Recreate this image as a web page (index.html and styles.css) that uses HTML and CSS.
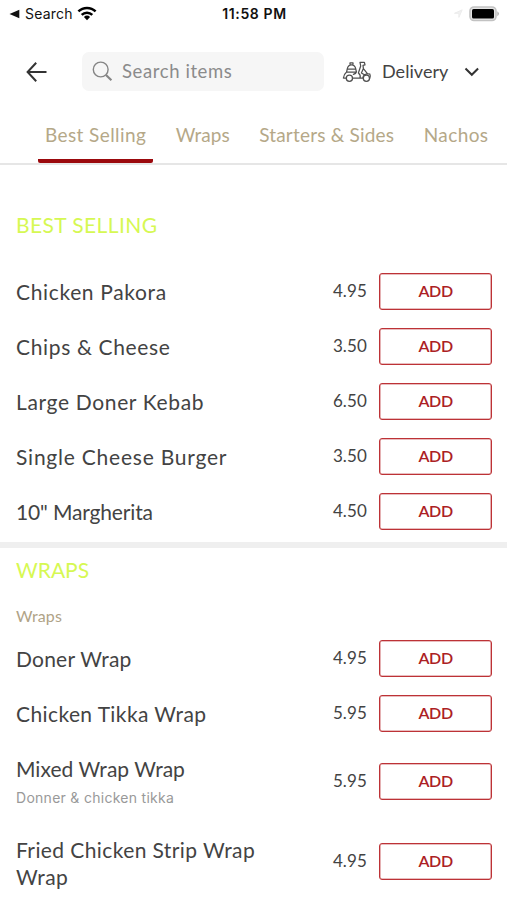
FILE: index.html
```html
<!DOCTYPE html>
<html lang="en">
<head>
<meta charset="utf-8">
<title>Menu</title>
<link rel="stylesheet" href="styles.css">
</head>
<body>
<header class="status">
  <div class="status-left">
    <svg width="11" height="10" viewBox="0 0 11 10"><path d="M0.5 5 10.3.8v8.4z" fill="#111"/></svg>
    <span class="back-app">Search</span>
    <svg class="wifi" width="20" height="15" viewBox="0 0 20 15"><g fill="none" stroke="#000" stroke-width="2.5"><path d="M1.4 5.4a12.3 12.3 0 0 1 17.2 0"/><path d="M4.7 8.8a7.6 7.6 0 0 1 10.6 0"/></g><path d="M10 14.2 6.9 11a4.6 4.6 0 0 1 6.2 0z"/></svg>
  </div>
  <span class="clock">11:58 PM</span>
  <div class="status-right">
    <svg width="9" height="9" viewBox="0 0 9 9"><path d="M.5 4.3 8.2.8 4.9 8.4V4.3z" fill="#f1f1f1" stroke="#ececec"/></svg>
    <svg width="31" height="16" viewBox="0 0 31 16"><rect x="1" y="1" width="26" height="13.5" rx="4" fill="#e4e4e4" stroke="#c2c2c2" stroke-width="1.6"/><rect x="3" y="3" width="22" height="9.5" rx="1.6"/><path d="M28.4 5.2q3 2.5 0 5z" fill="#aaa"/></svg>
  </div>
</header>
<nav class="toolbar">
  <svg class="arrow" width="22" height="20" viewBox="0 0 22 20"><path d="M20.5 10H2M10.2.8 1.6 10l8.6 9.2" fill="none" stroke="#333" stroke-width="2"/></svg>
  <div class="search">
    <svg width="21" height="21" viewBox="0 0 21 21" fill="none" stroke="#858585"><circle cx="8.7" cy="8.5" r="7.4" stroke-width="1.4"/><path d="m14 14 5.4 5.2" stroke-width="2.2"/></svg>
    <span class="placeholder">Search items</span>
  </div>
  <div class="mode">
    <svg width="30" height="22" viewBox="0 0 30 22" fill="none" stroke="#505050" stroke-width="1.25" stroke-linejoin="round" stroke-linecap="round"><path d="M5.2 8.2a4.4 5.4 0 0 1 8.6 0zM8 3V1.8h3V3M5.2 8.2 4.6 11h9.8l-.6-2.8M4.6 11Q2 13 1.4 17h2.8M14.4 11q-.4 1.6-3 2.4M10.6 17.2h10.2c.2-3.4 3.2-5 7-4.2M18 1.4h4.4l.6 2.4-2 .6.4 3.2 4 5M18 1.4l.7 3.6-2.3 7q2.6 2 1.6 5.2M21.4 7.6l-2 4.4 3 1.8M27.8 13q1 2.2 0 4.2"/><circle cx="7.4" cy="17.2" r="3.1"/><circle cx="24.4" cy="17.2" r="3.1"/></svg>
    <span class="mode-name">Delivery</span>
    <svg width="16" height="10" viewBox="0 0 16 10"><path d="m1.5 1.5 6.3 6.3 6.3-6.3" fill="none" stroke="#333" stroke-width="2"/></svg>
  </div>
</nav>
<div class="tabs">
  <span class="tab wide active">Best Selling</span>
  <span class="tab">Wraps</span>
  <span class="tab mid">Starters &amp; Sides</span>
  <span class="tab wide">Nachos</span>
</div>
<main>
  <section class="best">
    <h2>BEST SELLING</h2>
    <div class="row"><span class="name loose">Chicken Pakora</span><span class="price">4.95</span><button>ADD</button></div>
    <div class="row"><span class="name loose">Chips &amp; Cheese</span><span class="price">3.50</span><button>ADD</button></div>
    <div class="row"><span class="name loose">Large Doner Kebab</span><span class="price">6.50</span><button>ADD</button></div>
    <div class="row"><span class="name looser">Single Cheese Burger</span><span class="price">3.50</span><button>ADD</button></div>
    <div class="row"><span class="name tight">10" Margherita</span><span class="price">4.50</span><button>ADD</button></div>
  </section>
  <section class="wraps">
    <h2>WRAPS</h2>
    <h3>Wraps</h3>
    <div class="row"><span class="name snug">Doner Wrap</span><span class="price">4.95</span><button>ADD</button></div>
    <div class="row"><span class="name">Chicken Tikka Wrap</span><span class="price">5.95</span><button>ADD</button></div>
    <div class="row mixed"><div class="name even">Mixed Wrap Wrap<p class="desc">Donner &amp; chicken tikka</p></div><span class="price">5.95</span><button>ADD</button></div>
    <div class="row fried"><span class="name">Fried Chicken Strip Wrap Wrap</span><span class="price">4.95</span><button>ADD</button></div>
  </section>
</main>
</body>
</html>
```
FILE: styles.css
```css
* { box-sizing: border-box; }
body { margin: 0; height: 900px; overflow: hidden; background: #fff; color: #434343; font-family: Lato, sans-serif; }
svg { display: block; flex: none; }
.status { height: 27px; display: grid; grid-template-columns: 1fr auto 1fr; align-items: center; padding: 0 7px 0 9px; font-family: Inter, sans-serif; color: #111; }
.status-left, .status-right { display: flex; align-items: center; }
.status-left { gap: 5px; }
.status-right { justify-content: flex-end; gap: 6px; }
.back-app { font-size: 14px; letter-spacing: .2px; }
.wifi { margin-left: -1px; }
.clock { font-size: 14px; font-weight: 600; letter-spacing: .65px; }
.toolbar { height: 89px; display: flex; align-items: center; padding: 0 27px 0 26px; }
.search { width: 242px; height: 39px; margin-left: 34px; padding: 0 0 1px 10px; border-radius: 7px; background: #f6f6f6; display: flex; align-items: center; gap: 9px; color: #8b8b8b; font-size: 18.5px; letter-spacing: .6px; }
.mode { flex: 1; margin-left: 18px; display: flex; align-items: center; font-size: 18px; letter-spacing: .05px; }
.mode-name { flex: 1; margin-left: 10px; padding-bottom: 1px; }
.tabs { height: 49px; display: flex; padding-left: 38px; border-bottom: 2px solid #e6e6e6; color: #b5a888; font-size: 19px; white-space: nowrap; }
.tab { height: 47px; padding: 7px 7px 0; margin-right: 15.5px; line-height: 24px; }
.mid { letter-spacing: .2px; }
.wide { letter-spacing: .4px; }
.active { border-bottom: 4px solid #9b090d; border-radius: 2px; }
.best { height: 377px; padding-top: 45px; }
h2 { margin: 0 0 0 16px; color: #d6f853; font-size: 21px; line-height: 30px; font-weight: 400; }
.best h2 { margin-bottom: 24px; letter-spacing: .4px; }
.row { height: 55px; padding: 0 15px 0 16px; display: flex; align-items: center; }
.name { width: 295px; padding-right: 30px; font-size: 21px; line-height: 27px; letter-spacing: .4px; }
.loose { letter-spacing: .65px; }
.looser { letter-spacing: .77px; }
.snug { letter-spacing: .22px; }
.even { letter-spacing: .03px; }
.tight { letter-spacing: -.15px; }
.price { width: 69px; padding: 0 0 2px 22.5px; font-size: 17px; letter-spacing: .1px; }
button { width: 113px; height: 37px; padding: 0 0 2px; border: 1px solid #bd3236; box-shadow: inset 0 0 0 .6px #d47d80; border-radius: 3px; background: #fff; color: #ac2024; font: 600 16px Lato, sans-serif; letter-spacing: -.3px; }
.wraps { border-top: 6px solid #efefef; padding-top: 7px; }
h3 { margin: 19px 0 3px 16px; color: #b0a387; font-size: 16px; line-height: 24px; font-weight: 400; letter-spacing: .1px; }
.mixed { height: 81px; }
.desc { margin: 5px 0 0; font: 14px/22px Inter, sans-serif; letter-spacing: .28px; color: #999; }
.fried { height: 78px; }
.fried .name { padding-top: 3px; }
```
